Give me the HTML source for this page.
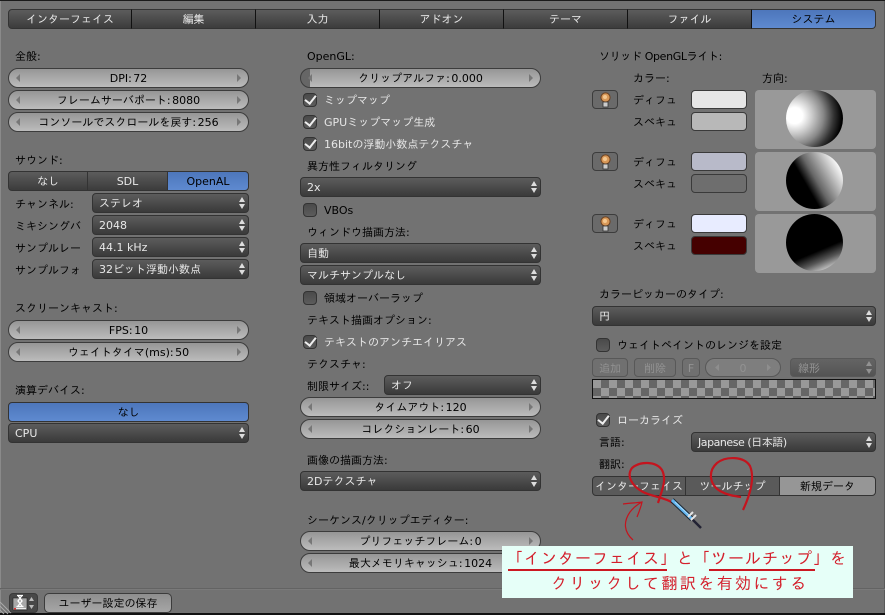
<!DOCTYPE html>
<html><head><meta charset="utf-8"><style>
html,body{margin:0;padding:0}
#p{position:relative;width:885px;height:615px;overflow:hidden;background:#727272;font:11px "DejaVu Sans","IPAGothic","Noto Sans CJK JP",sans-serif;color:#000}
#p div,#p svg{position:absolute;box-sizing:border-box}
.l{color:#000;white-space:nowrap;line-height:14px;height:14px;margin-top:1px}
.w{color:#e6e6e6;white-space:nowrap;line-height:14px;height:14px;margin-top:1px}
.n{height:20px;border:1px solid #3c3c3c;border-radius:10px;background:linear-gradient(#969696,#bcbcbc);text-align:center;line-height:20px;white-space:nowrap;word-spacing:-2px}
.n:before{content:"";position:absolute;left:7px;top:5px;border:4px solid transparent;border-left:0;border-right:4px solid #777}
.n:after{content:"";position:absolute;right:7px;top:5px;border:4px solid transparent;border-right:0;border-left:4px solid #777}
.s{height:20px;border:1px solid #333;border-radius:4px;background:linear-gradient(#5c5c5c,#3a3a3a);color:#e8e8e8;padding-left:6px;line-height:20px;white-space:nowrap}
.s:before{content:"";position:absolute;right:3px;top:3px;border:3.5px solid transparent;border-top:0;border-bottom:5px solid #ddd}
.s:after{content:"";position:absolute;right:3px;top:10px;border:3.5px solid transparent;border-bottom:0;border-top:5px solid #ddd}
.b{height:20px;border:1px solid #333;background:linear-gradient(#5c5c5c,#3c3c3c);color:#e8e8e8;text-align:center;line-height:20px;white-space:nowrap}
.bl{background:linear-gradient(#4d76bb,#5e8ad0);color:#000}
.c{width:14px;height:14px;border:1px solid #333;border-radius:4px;background:linear-gradient(#4a4a4a,#5c5c5c)}
.ck:after{content:"";position:absolute;left:3px;top:-1px;width:5px;height:9px;border:solid #eee;border-width:0 2px 2px 0;transform:rotate(38deg)}
.sw{left:691px;width:56px;height:19px;border:1px solid #3a3a3a;border-radius:4px}
.sp{left:755px;width:121px;height:59px;background:#999;border-radius:4px}
.o{left:786px;width:57px;height:57px;border-radius:50%}
.bu{left:592px;width:26px;height:19px;border:1px solid #3c3c3c;border-radius:4px;background:#6a6a6a}
.d{border:1px solid #585858;border-radius:4px;background:#707070;color:#929292;text-align:center;line-height:19px;height:19px;white-space:nowrap}
.a{white-space:nowrap;color:#d4202c;font-size:16px;line-height:20px}
</style></head><body><div id="p">
<div style="left:0;top:0;width:885px;height:1px;background:#1a1a1a"></div>
<div style="left:0;top:1px;width:1px;height:614px;background:#8a8a8a"></div>
<div style="left:884px;top:1px;width:1px;height:614px;background:#5a5a5a"></div>

<div class="b" style="left:8px;top:9px;width:124px;border-radius:4px 0 0 4px">インターフェイス</div>
<div class="b" style="left:131px;top:9px;width:125px;border-left:1px solid #111">編集</div>
<div class="b" style="left:255px;top:9px;width:125px;border-left:1px solid #111">入力</div>
<div class="b" style="left:379px;top:9px;width:125px;border-left:1px solid #111">アドオン</div>
<div class="b" style="left:503px;top:9px;width:125px;border-left:1px solid #111">テーマ</div>
<div class="b" style="left:627px;top:9px;width:125px;border-left:1px solid #111">ファイル</div>
<div class="b bl" style="left:751px;top:9px;width:125px;border-radius:0 4px 4px 0;border-left:1px solid #111">システム</div>

<div class="l" style="left:15px;top:49px">全般:</div>
<div class="n" style="left:8px;top:68px;width:241px">DPI: 72</div>
<div class="n" style="left:8px;top:90px;width:241px">フレームサーバポート: 8080</div>
<div class="n" style="left:8px;top:112px;width:241px">コンソールでスクロールを戻す: 256</div>
<div class="l" style="left:15px;top:153px">サウンド:</div>
<div class="b" style="left:8px;top:171px;width:80px;border-radius:4px 0 0 4px">なし</div>
<div class="b" style="left:87px;top:171px;width:81px">SDL</div>
<div class="b bl" style="left:167px;top:171px;width:82px;border-radius:0 4px 4px 0">OpenAL</div>
<div class="l" style="left:15px;top:197px">チャンネル:</div><div class="s" style="left:92px;top:193px;width:157px">ステレオ</div>
<div class="l" style="left:15px;top:219px">ミキシングバ</div><div class="s" style="left:92px;top:215px;width:157px">2048</div>
<div class="l" style="left:15px;top:241px">サンプルレー</div><div class="s" style="left:92px;top:237px;width:157px">44.1 kHz</div>
<div class="l" style="left:15px;top:263px">サンプルフォ</div><div class="s" style="left:92px;top:259px;width:157px">32ビット浮動小数点</div>
<div class="l" style="left:15px;top:301px">スクリーンキャスト:</div>
<div class="n" style="left:8px;top:320px;width:241px">FPS: 10</div>
<div class="n" style="left:8px;top:342px;width:241px">ウェイトタイマ(ms): 50</div>
<div class="l" style="left:15px;top:383px">演算デバイス:</div>
<div class="b bl" style="left:8px;top:402px;width:241px;border-radius:4px">なし</div>
<div class="s" style="left:8px;top:423px;width:241px">CPU</div>

<div class="l" style="left:307px;top:49px">OpenGL:</div>
<div class="n" style="left:300px;top:68px;width:241px;background:linear-gradient(90deg,#666 9px,transparent 9px),linear-gradient(#969696,#bcbcbc)">クリップアルファ: 0.000</div>
<div class="c ck" style="left:303px;top:93px"></div><div class="w" style="left:324px;top:93px">ミップマップ</div>
<div class="c ck" style="left:303px;top:115px"></div><div class="w" style="left:324px;top:115px">GPUミップマップ生成</div>
<div class="c ck" style="left:303px;top:137px"></div><div class="w" style="left:324px;top:137px">16bitの浮動小数点テクスチャ</div>
<div class="l" style="left:307px;top:159px">異方性フィルタリング</div>
<div class="s" style="left:300px;top:177px;width:241px">2x</div>
<div class="c" style="left:303px;top:203px"></div><div class="w" style="left:324px;top:203px;color:#000">VBOs</div>
<div class="l" style="left:307px;top:225px">ウィンドウ描画方法:</div>
<div class="s" style="left:300px;top:243px;width:241px">自動</div>
<div class="s" style="left:300px;top:265px;width:241px">マルチサンプルなし</div>
<div class="c" style="left:303px;top:291px"></div><div class="w" style="left:324px;top:291px;color:#000">領域オーバーラップ</div>
<div class="l" style="left:307px;top:313px">テキスト描画オプション:</div>
<div class="c ck" style="left:303px;top:335px"></div><div class="w" style="left:324px;top:335px">テキストのアンチエイリアス</div>
<div class="l" style="left:307px;top:357px">テクスチャ:</div>
<div class="l" style="left:307px;top:379px">制限サイズ::</div><div class="s" style="left:384px;top:375px;width:157px">オフ</div>
<div class="n" style="left:300px;top:397px;width:241px">タイムアウト: 120</div>
<div class="n" style="left:300px;top:419px;width:241px">コレクションレート: 60</div>
<div class="l" style="left:307px;top:453px">画像の描画方法:</div>
<div class="s" style="left:300px;top:471px;width:241px">2Dテクスチャ</div>
<div class="l" style="left:307px;top:513px">シーケンス/クリップエディター:</div>
<div class="n" style="left:300px;top:531px;width:241px">プリフェッチフレーム: 0</div>
<div class="n" style="left:300px;top:553px;width:241px">最大メモリキャッシュ: 1024</div>

<div class="l" style="left:599px;top:49px;letter-spacing:-.35px">ソリッド OpenGLライト:</div>
<div class="l" style="left:633px;top:71px">カラー:</div>
<div class="l" style="left:762px;top:71px">方向:</div>
<div class="bu" style="top:90px"><svg style="left:6px;top:1px" width="13" height="16" viewBox="0 0 13 16"><circle cx="6.5" cy="5.500" r="4.600" fill="#d89858" stroke="#6a4020"/><circle cx="6" cy="5" r="2" fill="#f4c890"/><rect x="4" y="10" width="5" height="5" fill="#ccc" stroke="#333" stroke-width=".8"/></svg></div>
<div class="bu" style="top:152px"><svg style="left:6px;top:1px" width="13" height="16" viewBox="0 0 13 16"><circle cx="6.5" cy="5.500" r="4.600" fill="#d89858" stroke="#6a4020"/><circle cx="6" cy="5" r="2" fill="#f4c890"/><rect x="4" y="10" width="5" height="5" fill="#ccc" stroke="#333" stroke-width=".8"/></svg></div>
<div class="bu" style="top:214px"><svg style="left:6px;top:1px" width="13" height="16" viewBox="0 0 13 16"><circle cx="6.5" cy="5.500" r="4.600" fill="#d89858" stroke="#6a4020"/><circle cx="6" cy="5" r="2" fill="#f4c890"/><rect x="4" y="10" width="5" height="5" fill="#ccc" stroke="#333" stroke-width=".8"/></svg></div>
<div class="l" style="left:633px;top:93px">ディフュ</div><div class="sw" style="top:90px;background:#e6e6e6"></div>
<div class="l" style="left:633px;top:115px">スベキュ</div><div class="sw" style="top:112px;background:#b8b8b8"></div>
<div class="l" style="left:633px;top:155px">ディフュ</div><div class="sw" style="top:152px;background:#b8bac9"></div>
<div class="l" style="left:633px;top:177px">スベキュ</div><div class="sw" style="top:174px;background:#6e6e6e"></div>
<div class="l" style="left:633px;top:217px">ディフュ</div><div class="sw" style="top:214px;background:#e8ecff"></div>
<div class="l" style="left:633px;top:239px">スベキュ</div><div class="sw" style="top:236px;background:#450000"></div>
<div class="sp" style="top:90px"></div><div class="sp" style="top:152px"></div><div class="sp" style="top:214px"></div>
<div class="o" style="top:90px;background:radial-gradient(circle at 15% 45%,#fff 0,#fff 14%,#ccc 30%,#888 50%,#333 68%,#000 82%)"></div>
<div class="o" style="top:152px;background:linear-gradient(240deg,#fff 12%,#bbb 28%,#666 48%,#000 62%)"></div>
<div class="o" style="top:214px;background:linear-gradient(337deg,#ccc 10%,#555 24%,#000 38%)"></div>

<div class="l" style="left:599px;top:287px">カラーピッカーのタイプ:</div>
<div class="s" style="left:592px;top:306px;width:284px">円</div>
<div class="c" style="left:596px;top:338px"></div><div class="l" style="left:617px;top:338px">ウェイトペイントのレンジを設定</div>
<div class="d" style="left:592px;top:358px;width:36px">追加</div>
<div class="d" style="left:634px;top:358px;width:42px">削除</div>
<div class="d" style="left:682px;top:358px;width:18px">F</div>
<div class="d" style="left:705px;top:358px;width:76px;border-radius:10px;background:#7e7e7e">0</div>
<svg style="left:705px;top:358px" width="76" height="19"><path d="M14 6V13L10 9.500ZM62 6V13L66 9.500Z" fill="#8e8e8e"/></svg>
<div class="d" style="left:790px;top:358px;width:86px;background:linear-gradient(#646464,#545454);text-align:left;padding-left:7px">線形</div>
<svg style="left:864px;top:359px" width="10" height="17"><path d="M2 7L5 2L8 7ZM2 10L5 15L8 10Z" fill="#929292"/></svg>
<div style="left:592px;top:379px;width:284px;height:20px;border:1px solid #111;background:repeating-conic-gradient(#666 0 25%,#999 0 50%) 0 0/16px 16px"></div>
<div class="c ck" style="left:596px;top:413px"></div><div class="w" style="left:617px;top:413px">ローカライズ</div>
<div class="l" style="left:599px;top:435px">言語:</div><div class="s" style="left:691px;top:432px;width:185px;letter-spacing:-.45px">Japanese (日本語)</div>
<div class="l" style="left:599px;top:457px">翻訳:</div>
<div class="b" style="left:592px;top:476px;width:94px;border-radius:4px 0 0 4px;background:#5a5a5a">インターフェイス</div>
<div class="b" style="left:685px;top:476px;width:95px;background:#5a5a5a">ツールチップ</div>
<div class="b" style="left:779px;top:476px;width:97px;border-radius:0 4px 4px 0;background:#969696;color:#000">新規データ</div>

<div style="left:0;top:588px;width:885px;height:1px;background:#636363"></div>
<div style="left:0;top:589px;width:885px;height:1px;background:#7a7a7a"></div>
<div style="left:0;top:613px;width:885px;height:2px;background:#111"></div>
<svg style="left:0;top:601px" width="12" height="14"><path d="M0 1L11 12M0 5L8 13M0 9L4 13" stroke="#aaa" fill="none"/></svg>
<div style="left:9px;top:593px;width:29px;height:20px;border:1px solid #3a3a3a;border-radius:4px;background:#484848"></div>
<svg style="left:12px;top:594px" width="24" height="18" viewBox="0 0 24 18"><rect x="1" y="4" width="14" height="12" fill="#a8a8a8" stroke="#222" stroke-width=".6"/><path d="M5 1.500H11M6 1.500L10 7L6 12M10 1.500L6 7L10 12M4.500 12.500H11.500" stroke="#fff" stroke-width="1.300" fill="none"/><path d="M3 14.500H14" stroke="#eee"/><rect x="2" y="14" width="2" height="1.500" fill="#d33"/><path d="M17 7L19.500 3L22 7Z M17 11L19.500 15L22 11Z" fill="#bbb"/></svg>
<div class="n" style="left:44px;top:593px;width:128px;height:20px;border-radius:5px;background:linear-gradient(#8e8e8e,#a6a6a6)">ユーザー設定の保存</div>
<style>#p .n[style*="left:44px"]:before,#p .n[style*="left:44px"]:after{display:none}</style>

<div style="left:502px;top:546px;width:351px;height:52px;background:#e6fff8"></div>
<div class="a" style="left:507px;top:549px;letter-spacing:1px">「インターフェイス」と「ツールチップ」を</div>
<div class="a" style="left:551px;top:574px;letter-spacing:2.4px">クリックして翻訳を有効にする</div>
<div style="left:508px;top:569px;width:159px;height:2px;background:#cc1822"></div>
<div style="left:709px;top:569px;width:106px;height:2px;background:#cc1822"></div>

<svg style="left:0;top:0" width="885" height="615" fill="none">
<path d="M658 503C662 490 667 480 662 470C656 461 640 461 632 468C626 476 632 486 643 492C653 497 664 497 673 503" stroke="#c4141e" stroke-width="2.200"/>
<path d="M743 510C750 495 755 478 750 466C744 456 726 456 717 463C708 471 709 484 720 491C727 495 734 496 741 497" stroke="#c4141e" stroke-width="2.200"/>
<path d="M633 540C624 532 623 522 630 512C634 507 638 504 642 502M623 504C630 503 636 503 642 502C641 507 639 512 637 517" stroke="#c4141e" stroke-width="1.200"/>
<path d="M672 500L692 519" stroke="#1c2630" stroke-width="5"/>
<path d="M672 500L692 519" stroke="#62b4ee" stroke-width="3"/>
<path d="M675 502L690 516" stroke="#a8dcff" stroke-width="1"/>
<path d="M692 519L701 528" stroke="#223" stroke-width="2.500"/>
<path d="M688 517L693 512M691 520L696 515" stroke="#e4e4e4" stroke-width="2"/>
</svg>
</div></body></html>
